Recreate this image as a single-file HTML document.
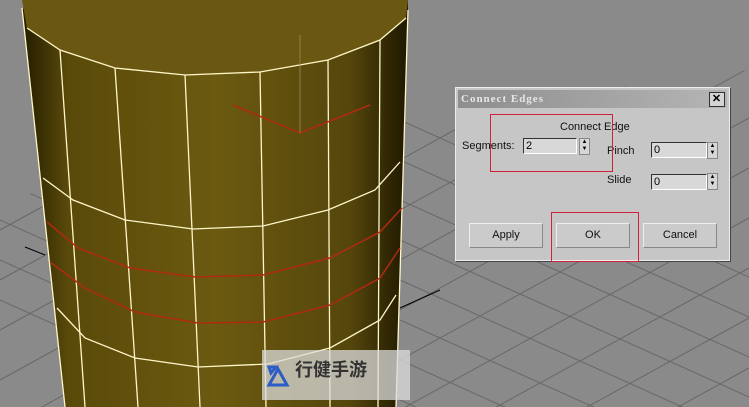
<!DOCTYPE html><html style="overflow:hidden;width:749px;height:407px"><head><style>
body{margin:0;width:749px;height:407px;overflow:hidden;background:#8a8a8a;font-family:"Liberation Sans","Noto Sans CJK SC",sans-serif;position:relative}
svg{display:block}
.dlg{position:absolute;left:455px;top:87px;width:275px;height:174px;background:#c6c6c6;border:1px solid #eee;box-shadow:1px 1px 0 #444;box-sizing:border-box}
.tb{position:absolute;left:2px;top:2px;right:2px;height:18px;background:linear-gradient(90deg,#8e8e8e,#b5b5b5);color:#e6e6e6;font:bold 11px "Liberation Serif",serif;letter-spacing:1px;line-height:18px;padding-left:3px}
.x{position:absolute;right:2px;top:2px;width:14px;height:13px;background:#d4d4d4;border:1px solid #333;font:bold 11px sans-serif;line-height:12px;text-align:center;color:#000}
.t{position:absolute;font-size:11px;color:#111}
.in{position:absolute;height:14px;width:52px;background:#d8d8d8;border-top:1px solid #333;border-left:1px solid #333;border-bottom:1px solid #fff;border-right:1px solid #fff;font-size:11px;line-height:14px;padding-left:2px;box-sizing:content-box}
.sp{position:absolute;width:9px;height:15px;background:#d6d6d6;border:1px solid #888;font-size:6px;line-height:7px;text-align:center}
.b{position:absolute;top:135px;width:72px;height:23px;background:#cbcbcb;border:1px solid #888;border-top-color:#eee;border-left-color:#eee;font-size:11px;text-align:center;line-height:23px;color:#111}
.r{position:absolute;border:1px solid #d0213a}
</style></head><body>
<svg width="749" height="407" style="position:absolute;left:0;top:0">
<defs><linearGradient id="g" x1="0" x2="1"><stop offset="0" stop-color="#231d00"/><stop offset=".12" stop-color="#5a4a0a"/><stop offset=".5" stop-color="#6b5a10"/><stop offset=".85" stop-color="#55460c"/><stop offset="1" stop-color="#1e1800"/></linearGradient>
<clipPath id="c"><path d="M0 200 L410 115 L749 70 L749 407 L0 407Z"/></clipPath></defs>
<g stroke="#686868" stroke-width="1" fill="none" clip-path="url(#c)">
<path d="M0 -60 L749 277 M0 -20 L749 317 M0 20 L749 357 M0 60 L749 397 M0 100 L749 437 M0 140 L749 477 M0 180 L749 517 M0 220 L749 557 M0 260 L749 597 M0 300 L749 637"/>
<path d="M0 230 L749 -182 M0 280 L749 -132 M0 330 L749 -82 M0 380 L749 -32 M0 430 L749 18 M0 480 L749 68 M0 530 L749 118 M0 580 L749 168 M0 630 L749 218 M0 680 L749 268 M0 730 L749 318 M0 780 L749 368"/>
</g>
<path d="M25 247 L45 255 M400 308 L440 290" stroke="#000"/>
<path d="M22 10 L30 0 L408 0 L408 12 L396 407 L65 407 Z" fill="url(#g)"/>
<path d="M27 28 L60 50 L115 68 L185 75 L260 72 L328 60 L380 40 L406 18 L408 0 L22 0 Z" fill="#6a5812"/>
<g stroke="#fff6c8" stroke-width="1.3" fill="none">
<path d="M22 8 L65 407 M408 10 L396 407"/>
<path d="M27 28 L60 50 L115 68 L185 75 L260 72 L328 60 L380 40 L406 18"/>
<path d="M43 178 L73 200 L125 220 L193 229 L263 226 L328 210 L375 190 L400 162"/>
<path d="M57 308 L85 338 L135 358 L198 367 L268 364 L330 348 L380 320 L396 295"/>
<path d="M60 50 L85 407 M115 68 L138 407 M185 75 L200 407 M260 72 L266 407 M328 60 L330 407 M380 40 L378 407"/>
</g>
<g stroke="#b02a10" stroke-width="1.5" fill="none">
<path d="M47 222 L78 248 L130 268 L195 277 L263 275 L330 258 L380 232 L402 208"/>
<path d="M50 262 L85 288 L135 312 L198 323 L263 322 L330 305 L380 278 L400 248"/>
<path d="M233 105 L300 133 L370 105"/>
</g>
<path d="M300 35 L300 133" stroke="#9a8a5a" stroke-width="0.8"/>
</svg>
<div style="position:absolute;left:262px;top:350px;width:148px;height:50px;background:rgba(220,220,220,.75)"></div>
<svg width="24" height="24" style="position:absolute;left:266px;top:364px"><path d="M3 3 L10 3 L5 9Z M12 5 L21 21 L3 21Z" fill="none" stroke="#2c5cc5" stroke-width="3"/></svg>
<div style="position:absolute;left:295px;top:356px;font:bold 18px 'Noto Sans CJK SC',sans-serif;color:#333;line-height:26px">行健手游</div>
<div class="dlg">
<div class="tb">Connect Edges<div class="x">✕</div></div>
<div class="t" style="left:104px;top:33px">Connect Edge</div>
<div class="t" style="left:6px;top:52px">Segments:</div>
<div class="in" style="left:67px;top:50px;width:50px">2</div>
<div class="sp" style="left:123px;top:50px">▲<br>▼</div>
<div class="t" style="left:151px;top:57px">Pinch</div>
<div class="in" style="left:195px;top:54px">0</div>
<div class="sp" style="left:251px;top:54px">▲<br>▼</div>
<div class="t" style="left:151px;top:86px">Slide</div>
<div class="in" style="left:195px;top:86px">0</div>
<div class="sp" style="left:251px;top:85px">▲<br>▼</div>
<div class="b" style="left:13px">Apply</div>
<div class="b" style="left:100px">OK</div>
<div class="b" style="left:187px">Cancel</div>
</div>
<div class="r" style="left:490px;top:114px;width:121px;height:56px"></div>
<div class="r" style="left:551px;top:212px;width:86px;height:48px"></div>
</body></html>
